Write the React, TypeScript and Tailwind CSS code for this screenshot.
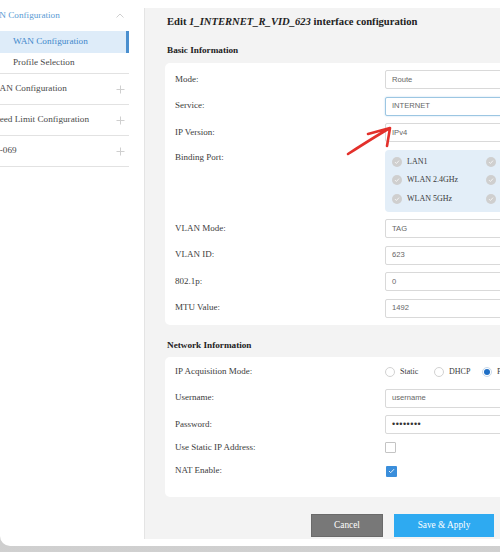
import React from "react";

const serif = { fontFamily: '"Liberation Serif", "Times New Roman", serif' };
const sans = { fontFamily: '"Liberation Sans", Arial, sans-serif' };

function Plus() {
  return (
    <svg width="9" height="9" viewBox="0 0 9 9" className="shrink-0">
      <path d="M4.5 0.5v8M0.5 4.5h8" stroke="#cfcfcf" strokeWidth="1" />
    </svg>
  );
}

function Input({ value, focus }: { value: string; focus?: boolean }) {
  return (
    <div
      className={
        "h-[19px] w-[170px] shrink-0 flex items-center pl-[6px] bg-white rounded-[2px] border text-[7.6px] text-[#666] " +
        (focus ? "border-[#9cc6e2] shadow-[0_0_2px_#b9d8ee]" : "border-[#d9d9d9]")
      }
      style={sans}
    >
      {value}
    </div>
  );
}

function Row({ label, children, top }: { label: string; children: React.ReactNode; top?: boolean }) {
  return (
    <div className={"flex " + (top ? "items-start" : "items-center min-h-[19px]")}>
      <div className={"w-[210px] shrink-0 text-[9px] text-[#3c3c3c] " + (top ? "leading-[14px]" : "")}>{label}</div>
      {children}
    </div>
  );
}

function CheckCircle() {
  return (
    <span className="w-[10px] h-[10px] rounded-full bg-[#cfcfcf] flex items-center justify-center shrink-0">
      <svg width="6" height="6" viewBox="0 0 6 6">
        <path d="M1 3.1l1.4 1.4L5 1.6" stroke="#f4f4f4" strokeWidth="1" fill="none" />
      </svg>
    </span>
  );
}

function Radio({ checked }: { checked?: boolean }) {
  return (
    <span
      className={
        "w-[10px] h-[10px] rounded-full border bg-white flex items-center justify-center shrink-0 " +
        (checked ? "border-[#c9d9ea]" : "border-[#d2d2d2]")
      }
    >
      {checked && <span className="w-[6px] h-[6px] rounded-full bg-[#1f6fc6]" />}
    </span>
  );
}

export default function App() {
  const ports = ["LAN1", "LAN2", "WLAN 2.4GHz", "SSID2", "WLAN 5GHz", "SSID3"];
  return (
    <div className="relative w-[500px] h-[552px] overflow-hidden bg-gradient-to-b from-[#8a8a8a] to-[#d0d0d0]" style={serif}>
      <div className="flex h-[546px] bg-white rounded-bl-[10px] overflow-hidden">
        {/* Sidebar */}
        <aside className="w-[144px] shrink-0 pt-[5px]">
          <div className="w-[129px]">
            <div className="h-[21px] flex items-center justify-between pr-[5px]">
              <span className="ml-[-15px] text-[9.2px] text-[#5a9bd4] whitespace-nowrap">WAN Configuration</span>
              <svg width="8" height="5" viewBox="0 0 8 5">
                <path d="M0.5 4.5L4 1l3.5 3.5" stroke="#cfcfcf" strokeWidth="1" fill="none" />
              </svg>
            </div>
            <div className="mt-[5px] h-[22px] flex items-center pl-[13px] bg-[#deecf9] border-r-[3px] border-[#4a8fcf] text-[9.2px] text-[#3f88cb]">
              WAN Configuration
            </div>
            <div className="h-[21px] flex items-center pl-[13px] text-[9.2px] text-[#4a4a4a] border-b border-[#e2e2e2]">
              Profile Selection
            </div>
            {["LAN Configuration", "Speed Limit Configuration", "TR-069"].map((t, i) => (
              <div
                key={t}
                className="h-[31px] flex items-center justify-between pr-[4px] border-b border-[#e2e2e2] text-[9.2px] text-[#4a4a4a]"
              >
                <span className={"whitespace-nowrap " + (i === 0 ? "ml-[-6px]" : i === 1 ? "ml-[-10px]" : "ml-[-12px]")}>{t}</span>
                <Plus />
              </div>
            ))}
          </div>
        </aside>

        {/* Main */}
        <main className="flex-1 mt-[8px] h-[531px] bg-[#f3f3f3] border-l border-[#e4e4e4] overflow-hidden flex flex-col">
          <div className="pl-[22px] pt-[7px] h-[14px] box-content leading-[14px] text-[10.6px] font-bold text-[#222] whitespace-nowrap">
            Edit <i>1_INTERNET_R_VID_623</i> interface configuration
          </div>
          <div className="pl-[22px] mt-[15px] leading-[12px] text-[9.2px] font-bold text-[#222]">Basic Information</div>

          <div className="ml-[20px] mt-[7px] w-[400px] bg-white rounded-[5px] pl-[10px] pt-[7px] pb-[7.5px] flex flex-col gap-[7.5px]">
            <Row label="Mode:">
              <Input value="Route" />
            </Row>
            <Row label="Service:">
              <Input value="INTERNET" focus />
            </Row>
            <Row label="IP Version:">
              <Input value="IPv4" />
            </Row>
            <Row label="Binding Port:" top>
              <div className="w-[170px] h-[62px] bg-[#e3eef8] rounded-[4px] pl-[7px] pt-[3px] grid grid-cols-[94px_94px] auto-rows-[18.5px]">
                {ports.map((p) => (
                  <div key={p} className="flex items-center gap-[5px] text-[8px] text-[#3a3a3a] whitespace-nowrap">
                    <CheckCircle />
                    {p}
                  </div>
                ))}
              </div>
            </Row>
            <Row label="VLAN Mode:">
              <Input value="TAG" />
            </Row>
            <Row label="VLAN ID:">
              <Input value="623" />
            </Row>
            <Row label="802.1p:">
              <Input value="0" />
            </Row>
            <Row label="MTU Value:">
              <Input value="1492" />
            </Row>
          </div>

          <div className="pl-[22px] mt-[14px] leading-[12px] text-[9.2px] font-bold text-[#222]">Network Information</div>

          <div className="ml-[20px] mt-[6px] w-[400px] bg-white rounded-[5px] pl-[10px] pt-[5.5px] pb-[16.5px] flex flex-col">
            <Row label="IP Acquisition Mode:">
              <div className="flex items-center text-[8px] text-[#3a3a3a] whitespace-nowrap">
                <span className="flex items-center gap-[5px] w-[49px]">
                  <Radio />
                  Static
                </span>
                <span className="flex items-center gap-[5px] w-[48px]">
                  <Radio />
                  DHCP
                </span>
                <span className="flex items-center gap-[5px]">
                  <Radio checked />
                  PPPoE
                </span>
              </div>
            </Row>
            <div className="mt-[6.5px]">
              <Row label="Username:">
                <div className="h-[18px] flex">
                  <Input value="username" />
                </div>
              </Row>
            </div>
            <div className="mt-[8px]">
              <Row label="Password:">
                <div
                  className="h-[19px] w-[170px] flex items-center pl-[6px] bg-white rounded-[2px] border border-[#d9d9d9] text-[9px] tracking-[0.5px] text-[#333]"
                  style={sans}
                >
                  ••••••••
                </div>
              </Row>
            </div>
            <div className="mt-[4px]">
              <Row label="Use Static IP Address:">
                <span className="w-[11px] h-[11px] border border-[#c4c4c4] bg-white rounded-[1px]" />
              </Row>
            </div>
            <div className="mt-[4.5px]">
              <Row label="NAT Enable:">
                <span className="ml-[1px] w-[11px] h-[11px] bg-[#3a8edb] rounded-[1px] flex items-center justify-center">
                  <svg width="7" height="6" viewBox="0 0 7 6">
                    <path d="M1 3l1.7 1.7L6 1.2" stroke="#e6f1fb" strokeWidth="1" fill="none" />
                  </svg>
                </span>
              </Row>
            </div>
          </div>

          <div className="mt-[17px] flex justify-end gap-[11px] pr-[6px]">
            <button className="w-[72px] h-[23px] bg-[#787878] border border-[#6a6a6a] text-white text-[9.3px]" style={serif}>
              Cancel
            </button>
            <button className="w-[100px] h-[23px] bg-[#2eaaf1] text-white text-[9.3px]" style={serif}>
              Save &amp; Apply
            </button>
          </div>
        </main>
      </div>

      {/* Red annotation arrow */}
      <svg className="absolute left-0 top-0 pointer-events-none" width="500" height="552" viewBox="0 0 500 552">
        <path
          d="M348 154 C362 145 376 136 390 128 M390 128 L368 134 M390 128 L387 146"
          stroke="#e3302b"
          strokeWidth="2.6"
          strokeLinecap="round"
          fill="none"
        />
      </svg>
    </div>
  );
}
